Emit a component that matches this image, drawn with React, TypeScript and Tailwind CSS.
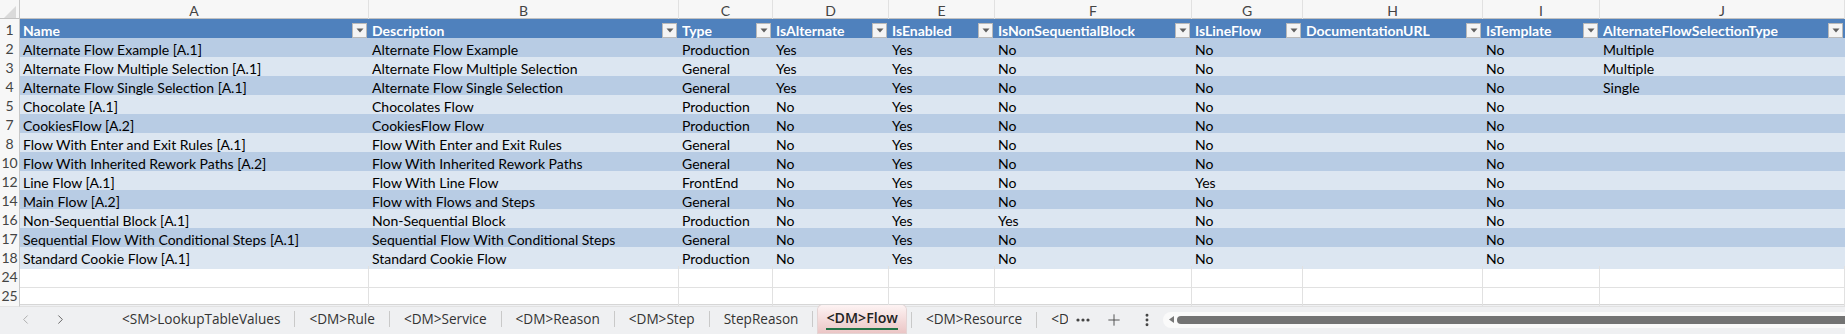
import { ChevronLeft, ChevronRight, EllipsisVertical, Plus } from "lucide-react";

const COLS =
	"grid h-[19px] grid-cols-[20px_349px_310px_94px_116px_106px_197px_111px_180px_117px_245px]";

const letters = ["A", "B", "C", "D", "E", "F", "G", "H", "I", "J"];

const headers = [
	"Name",
	"Description",
	"Type",
	"IsAlternate",
	"IsEnabled",
	"IsNonSequentialBlock",
	"IsLineFlow",
	"DocumentationURL",
	"IsTemplate",
	"AlternateFlowSelectionType",
];

type Row = [number, ...string[]];

const rows: Row[] = [
	[2, "Alternate Flow Example [A.1]", "Alternate Flow Example", "Production", "Yes", "Yes", "No", "No", "", "No", "Multiple"],
	[3, "Alternate Flow Multiple Selection [A.1]", "Alternate Flow Multiple Selection", "General", "Yes", "Yes", "No", "No", "", "No", "Multiple"],
	[4, "Alternate Flow Single Selection [A.1]", "Alternate Flow Single Selection", "General", "Yes", "Yes", "No", "No", "", "No", "Single"],
	[5, "Chocolate [A.1]", "Chocolates Flow", "Production", "No", "Yes", "No", "No", "", "No", ""],
	[7, "CookiesFlow [A.2]", "CookiesFlow Flow", "Production", "No", "Yes", "No", "No", "", "No", ""],
	[8, "Flow With Enter and Exit Rules [A.1]", "Flow With Enter and Exit Rules", "General", "No", "Yes", "No", "No", "", "No", ""],
	[10, "Flow With Inherited Rework Paths [A.2]", "Flow With Inherited Rework Paths", "General", "No", "Yes", "No", "No", "", "No", ""],
	[12, "Line Flow [A.1]", "Flow With Line Flow", "FrontEnd", "No", "Yes", "No", "Yes", "", "No", ""],
	[14, "Main Flow [A.2]", "Flow with Flows and Steps", "General", "No", "Yes", "No", "No", "", "No", ""],
	[16, "Non-Sequential Block [A.1]", "Non-Sequential Block", "Production", "No", "Yes", "Yes", "No", "", "No", ""],
	[17, "Sequential Flow With Conditional Steps [A.1]", "Sequential Flow With Conditional Steps", "General", "No", "Yes", "No", "No", "", "No", ""],
	[18, "Standard Cookie Flow [A.1]", "Standard Cookie Flow", "Production", "No", "Yes", "No", "No", "", "No", ""],
];

const tabs = ["<SM>LookupTableValues", "<DM>Rule", "<DM>Service", "<DM>Reason", "<DM>Step", "StepReason"];

function RowNum({ n }: { n: number }) {
	return (
		<div className="flex items-center justify-center border-r border-b border-[#c8c8c8] border-b-[#e4e4e4] bg-[#f7f7f7] text-[#444]">
			{n}
		</div>
	);
}

function FilterButton() {
	return (
		<span className="ml-auto mr-[2px] flex h-[15px] w-[15px] shrink-0 items-center justify-center border border-[#b9b9b9] bg-[#f4f4f4]">
			<svg width="8" height="5" viewBox="0 0 8 5">
				<polygon points="0.5,0.5 7.5,0.5 4,4.5" fill="#5f5f5f" />
			</svg>
		</span>
	);
}

function Sep() {
	return <span className="h-[16px] w-px shrink-0 bg-[#c9c9c9]" />;
}

export default function App() {
	return (
		<div className="h-[334px] w-[1845px] overflow-hidden bg-white font-['Lato',sans-serif] text-[14px] text-black">
			<div className={`${COLS} border-b border-[#c2c2c2] bg-[#f7f7f7] text-[#444]`}>
				<div className="flex items-end justify-end border-r border-[#c8c8c8] p-[3px]">
					<svg width="12" height="12" viewBox="0 0 12 12">
						<polygon points="12,0 12,12 0,12" fill="#dadada" />
					</svg>
				</div>
				{letters.map((l) => (
					<div key={l} className="flex items-center justify-center border-r border-[#e1e1e1]">
						{l}
					</div>
				))}
			</div>

			<div className={COLS}>
				<RowNum n={1} />
				{headers.map((h) => (
					<div key={h} className="flex items-center bg-[#4f81bd] pl-[3px] font-bold text-white">
						<span className="truncate">{h}</span>
						<FilterButton />
					</div>
				))}
			</div>

			{rows.map(([n, ...cells], i) => (
				<div key={n} className={COLS}>
					<RowNum n={n} />
					{cells.map((c, j) => (
						<div
							key={j}
							className={`flex items-center overflow-hidden whitespace-nowrap pl-[3px] ${i % 2 === 0 ? "bg-[#b8cce4]" : "bg-[#dce6f1]"}`}
						>
							{c}
						</div>
					))}
				</div>
			))}

			{[24, 25].map((n) => (
				<div key={n} className={COLS}>
					<RowNum n={n} />
					{letters.map((l) => (
						<div key={l} className="border-r border-b border-[#e1e1e1]" />
					))}
				</div>
			))}

			<div className="flex h-[30px] items-center border-t border-[#d6d6d6] bg-[#eff0f2] font-['Open_Sans',sans-serif] text-[13.6px] text-[#333]">
				<div className="flex w-[108px] shrink-0 items-center">
					<span className="flex w-[50px] justify-center">
						<ChevronLeft size={15} strokeWidth={1.4} color="#a5a5a5" />
					</span>
					<span className="ml-[2px] flex w-[16px] justify-center">
						<ChevronRight size={15} strokeWidth={1.4} color="#555" />
					</span>
				</div>

				<div className="flex h-full w-[960px] shrink-0 items-center overflow-hidden whitespace-nowrap">
					{tabs.map((t) => (
						<div key={t} className="flex items-center">
							<span className="px-[14px]">{t}</span>
							<Sep />
						</div>
					))}
					<div className="mx-[5px] h-[28px] self-start rounded-t-[5px] bg-gradient-to-b from-[#fdf3f3] to-[#ebc6c6] px-[8px] pt-[2px] shadow-[0_0_0_1px_#e4d4d4]">
						<span className="inline-block border-b-2 border-[#217346] text-[14.2px] font-semibold leading-[21px] text-[#222]">
							{"<DM>Flow"}
						</span>
					</div>
					<Sep />
					<span className="px-[14px]">{"<DM>Resource"}</span>
					<Sep />
					<span className="px-[14px]">{"<DM>Status"}</span>
				</div>

				<div className="flex w-[30px] shrink-0 justify-center">
					<svg width="14" height="4" viewBox="0 0 14 4">
						<circle cx="2" cy="2" r="1.6" fill="#444" />
						<circle cx="7" cy="2" r="1.6" fill="#444" />
						<circle cx="12" cy="2" r="1.6" fill="#444" />
					</svg>
				</div>
				<div className="flex w-[32px] shrink-0 justify-center">
					<Plus size={18} strokeWidth={1.2} color="#444" />
				</div>
				<div className="flex w-[33px] shrink-0 justify-center">
					<EllipsisVertical size={16} strokeWidth={2.4} color="#444" />
				</div>

				<div className="flex h-[16px] flex-1 items-center rounded-l-full bg-[#fafafa] pl-[6px]">
					<svg width="5" height="7" viewBox="0 0 5 7">
						<polygon points="5,0 5,7 0,3.5" fill="#777" />
					</svg>
					<div className="ml-[3px] h-[8px] flex-1 rounded-l-full bg-[#737373]" />
				</div>
			</div>
		</div>
	);
}
